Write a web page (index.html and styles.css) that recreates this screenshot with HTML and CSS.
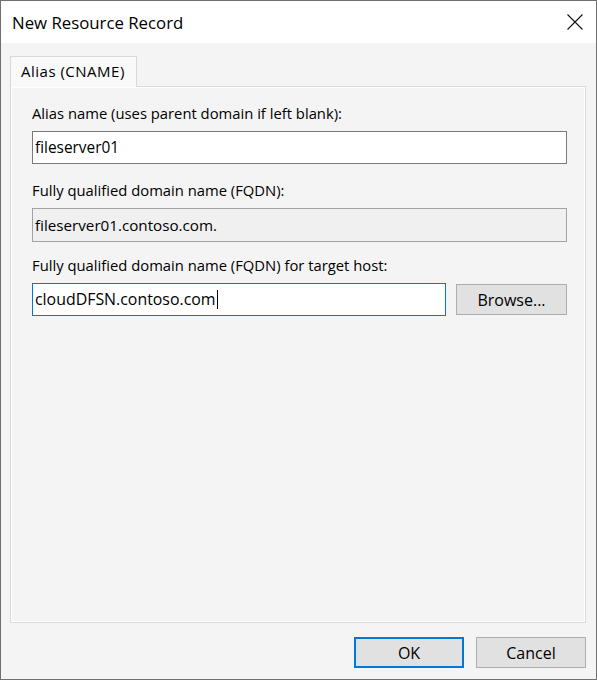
FILE: index.html
```html
<!DOCTYPE html>
<html>
<head>
<meta charset="utf-8">
<link rel="stylesheet" href="styles.css">
</head>
<body>
<div class="window">
  <div class="titlebar">
    <span class="title">New Resource Record</span>
    <svg class="close" width="16" height="16" viewBox="0 0 16 16"><path d="M0.5 0.5 L15.5 15.5 M15.5 0.5 L0.5 15.5" stroke="#111" stroke-width="1.1" fill="none"/></svg>
  </div>
  <div class="body">
    <div class="tabs"><div class="tab">Alias (CNAME)</div></div>
    <div class="panel">
      <div class="field f1">
        <div class="label">Alias name (uses parent domain if left blank):</div>
        <div class="input">fileserver01</div>
      </div>
      <div class="field f2">
        <div class="label">Fully qualified domain name (FQDN):</div>
        <div class="input disabled">fileserver01.contoso.com.</div>
      </div>
      <div class="field f3">
        <div class="label">Fully qualified domain name (FQDN) for target host:</div>
        <div class="row">
          <div class="input focus">cloudDFSN.contoso.com<span class="caret"></span></div>
          <div class="btn browse">Browse...</div>
        </div>
      </div>
    </div>
    <div class="footer">
      <div class="btn default">OK</div>
      <div class="btn">Cancel</div>
    </div>
  </div>
</div>
</body>
</html>
```
FILE: styles.css
```css
* { box-sizing: border-box; }
html, body { margin: 0; padding: 0; background: #f4f4f4; }
body { font-family: "Segoe UI", "Open Sans", "Noto Sans", sans-serif; font-size: 14.8px; color: #000; }
.window {
  width: 597px; height: 680px;
  border: 1px solid #707070;
  display: flex; flex-direction: column;
  background: #f4f4f4;
}
.titlebar {
  height: 43px; background: #fff;
  display: flex; align-items: center; justify-content: space-between;
  padding: 0 13px 0 11px;
}
.title { font-size: 16.8px; color: #000; }
.close { display: block; }
.body {
  flex: 1; display: flex; flex-direction: column;
  padding: 13px 10px 11px 9px;
}
.tabs { display: flex; position: relative; z-index: 1; margin-bottom: -1px; }
.tab {
  width: 127px; height: 31px;
  border: 1px solid #d9d9d9; border-bottom: none;
  background: #f9f9f9;
  padding: 4px 0 0 10px;
  font-size: 15px; letter-spacing: 0.5px;
}
.panel {
  height: 537px;
  border: 1px solid #d9d9d9;
  box-shadow: inset 0 0 0 1px #fff;
  padding: 17px 18px 0 21px;
  display: flex; flex-direction: column;
}
.label { line-height: 19px; height: 19px; margin-bottom: 8px; white-space: nowrap; }
.f2 { margin-top: 17px; }
.f3 { margin-top: 14px; }
.input {
  height: 33px; border: 1px solid #7a7a7a; background: #fff;
  padding: 0 2px; line-height: 31px; white-space: nowrap;
  font-size: 15.4px;
}
.disabled { background: #f0f0f0; border-color: #a3a3a3; height: 34px; line-height: 32px; font-size: 15.2px; }
.focus { border-color: #0078d7; flex: 0 0 414px; font-size: 15.9px; }
.caret { display: inline-block; width: 1px; height: 19px; background: #000; vertical-align: -4px; margin-left: 1px; }
.row { display: flex; gap: 10px; align-items: center; }
.btn {
  height: 31px; border: 1px solid #adadad; background: #e1e1e1;
  display: flex; align-items: center; justify-content: center;
  width: 110px; font-size: 16px;
}
.browse { width: 111px; height: 31px; }
.footer {
  margin-top: 14px;
  display: flex; justify-content: flex-end; gap: 12px;
}
.footer .btn { width: 110px; }
.default { border: 2px solid #0078d7; }
```
